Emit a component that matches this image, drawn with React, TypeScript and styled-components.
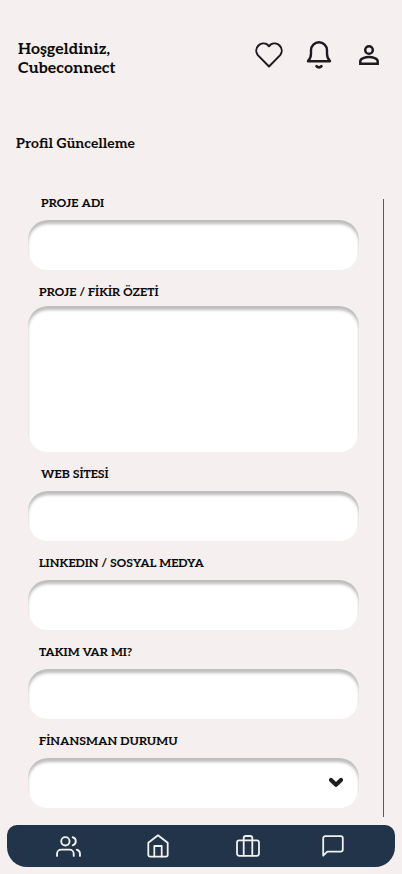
import React from "react";
import styled, { createGlobalStyle } from "styled-components";

const GlobalStyle = createGlobalStyle`
  *, *::before, *::after { box-sizing: border-box; }
  body {
    margin: 0;
    background: #f5efef;
    color: #0c0c0c;
    font-family: Aleo, "DejaVu Serif", serif;
    font-weight: 700;
  }
  button, input, textarea, select { font: inherit; color: inherit; }
`;

const Page = styled.div`
  display: flex;
  flex-direction: column;
  min-height: 100vh;
`;

const Header = styled.header`
  display: flex;
  justify-content: space-between;
  align-items: flex-start;
  padding: 37px 15px 0 18px;
`;

const Greeting = styled.p`
  margin: 0;
  padding-top: 3px;
  font-size: 16px;
  line-height: 19px;
`;

const Actions = styled.div`
  display: flex;
  gap: 14px;
  color: #1d1b20;
`;

const IconButton = styled.button`
  display: grid;
  place-items: center;
  width: 36px;
  height: 36px;
  padding: 0;
  border: 0;
  background: none;
  cursor: pointer;
`;

const Title = styled.h1`
  margin: 56px 16px 0;
  font-size: 14px;
  line-height: 20px;
`;

const Form = styled.form`
  margin: 45px 18px 0 28px;
  padding: 0 24px 9px 0;
  border-right: 1px solid #5c5a5a;
`;

const Field = styled.div`
  & + & {
    padding-top: 14px;
  }
`;

const Label = styled.label<{ $inset?: boolean; $first?: boolean; $tight?: boolean }>`
  display: block;
  padding-left: ${(p) => (p.$inset ? 13 : 11)}px;
  margin-bottom: ${(p) => (p.$tight ? 4 : 7)}px;
  font-size: 12px;
  line-height: ${(p) => (p.$first ? 10 : 18)}px;
  ${(p) => p.$first && "padding-bottom: 4px;"}
`;

const Control = styled.input`
  display: block;
  width: 100%;
  height: 50px;
  padding: 8px 18px;
  border: 0;
  border-radius: 20px;
  background: #fff;
  box-shadow: inset 0 4px 3px rgba(0, 0, 0, 0.26);
  font-size: 14px;
  outline-color: #213449;
`;

const TextArea = styled(Control).attrs({ as: "textarea" })`
  height: 146px;
  resize: none;
`;

const SelectWrap = styled.div`
  display: grid;
  align-items: center;

  & > * {
    grid-area: 1 / 1;
  }
  & > svg {
    justify-self: end;
    margin-right: 15px;
    pointer-events: none;
    color: #1d1b20;
  }
`;

const Select = styled(Control).attrs({ as: "select" })`
  appearance: none;
`;

const Nav = styled.nav`
  display: grid;
  grid-template-columns: 9fr 9fr 9fr 8fr;
  margin: 8px 7px 7px;
  padding: 0 22px 0 16px;
  border-radius: 10px 10px 20px 20px;
  background: #213449;
`;

const NavLink = styled.a`
  display: grid;
  place-items: center;
  height: 42px;
  color: #f3f1ee;
`;

const Line = styled.svg`
  display: block;
  fill: none;
  stroke: currentColor;
  stroke-linecap: round;
  stroke-linejoin: round;
`;

const Heart = () => (
  <Line width="30" height="28" viewBox="0 0 30 28" strokeWidth="2" aria-hidden="true">
    <path d="M15 25.500 3.800 14.100A7.200 7.200 0 0 1 13.500 3.700L15 5.300l1.500-1.600a7.200 7.200 0 0 1 9.700 10.400Z" />
  </Line>
);

const Bell = () => (
  <Line width="28" height="30" viewBox="0 0 28 30" strokeWidth="2.4" aria-hidden="true">
    <path d="M3 21.200c2-2 3-4.300 3-7.500V10.200a8 8 0 0 1 16 0v3.500c0 3.200 1 5.500 3 7.500Z" />
    <path d="M11.500 26.200c1.300 1.500 3.700 1.500 5 0" strokeWidth="2.600" />
  </Line>
);

const Person = () => (
  <Line width="22" height="22" viewBox="0 0 22 22" strokeWidth="2.5" aria-hidden="true">
    <circle cx="11" cy="6" r="3.800" />
    <path d="M2.300 19.700v-2.500c0-2.800 5-4.100 8.700-4.100s8.700 1.300 8.700 4.100v2.500Z" strokeLinejoin="miter" />
  </Line>
);

const Chevron = () => (
  <Line width="16" height="12" viewBox="0 0 16 12" strokeWidth="4.2" aria-hidden="true">
    <path d="m3 3 5 4.700L13 3" />
  </Line>
);

const Users = () => (
  <Line width="25" height="25" viewBox="0 0 24 24" strokeWidth="1.8" aria-hidden="true">
    <circle cx="9" cy="7" r="4" />
    <path d="M17 21v-2a4 4 0 0 0-4-4H5a4 4 0 0 0-4 4v2M23 21v-2a4 4 0 0 0-3-3.870M16 3.130a4 4 0 0 1 0 7.750" />
  </Line>
);

const Home = () => (
  <Line width="22" height="24" viewBox="0 0 22 24" strokeWidth="1.8" aria-hidden="true">
    <path d="M1.300 8.700 11 1.300l9.700 7.400v12.100a1.800 1.800 0 0 1-1.800 1.800H3.100a1.800 1.800 0 0 1-1.800-1.800Z" />
    <path d="M7.300 22.500V12h7.400v10.500" />
  </Line>
);

const Suitcase = () => (
  <Line width="24" height="22" viewBox="0 0 24 22" strokeWidth="1.8" aria-hidden="true">
    <rect x="1" y="5.300" width="22" height="15.500" rx="2.200" />
    <path d="M7.700 20.500V3.200A2.200 2.200 0 0 1 9.900 1h4.200a2.200 2.200 0 0 1 2.200 2.200v17.300" />
  </Line>
);

const Message = () => (
  <Line width="22" height="22" viewBox="0 0 22 22" strokeWidth="1.8" aria-hidden="true">
    <path d="M1.200 20.700V3.200a2 2 0 0 1 2-2h15.600a2 2 0 0 1 2 2v11.400a2 2 0 0 1-2 2H5.300Z" />
  </Line>
);

export default function App() {
  return (
    <Page>
      <GlobalStyle />
      <Header>
        <Greeting>
          Hoşgeldiniz,
          <br />
          Cubeconnect
        </Greeting>
        <Actions>
          <IconButton type="button" aria-label="Favoriler"><Heart /></IconButton>
          <IconButton type="button" aria-label="Bildirimler"><Bell /></IconButton>
          <IconButton type="button" aria-label="Profil"><Person /></IconButton>
        </Actions>
      </Header>
      <Title>Profil Güncelleme</Title>
      <Form>
        <Field>
          <Label htmlFor="name" $inset $first>PROJE ADI</Label>
          <Control id="name" type="text" />
        </Field>
        <Field>
          <Label htmlFor="summary" $tight>PROJE / FİKİR ÖZETİ</Label>
          <TextArea id="summary" />
        </Field>
        <Field>
          <Label htmlFor="website" $inset>WEB SİTESİ</Label>
          <Control id="website" type="text" />
        </Field>
        <Field>
          <Label htmlFor="social">LINKEDIN / SOSYAL MEDYA</Label>
          <Control id="social" type="text" />
        </Field>
        <Field>
          <Label htmlFor="team">TAKIM VAR MI?</Label>
          <Control id="team" type="text" />
        </Field>
        <Field>
          <Label htmlFor="funding">FİNANSMAN DURUMU</Label>
          <SelectWrap>
            <Select id="funding" />
            <Chevron />
          </SelectWrap>
        </Field>
      </Form>
      <Nav>
        <NavLink href="#community" aria-label="Topluluk"><Users /></NavLink>
        <NavLink href="#home" aria-label="Ana sayfa"><Home /></NavLink>
        <NavLink href="#projects" aria-label="Projeler"><Suitcase /></NavLink>
        <NavLink href="#messages" aria-label="Mesajlar"><Message /></NavLink>
      </Nav>
    </Page>
  );
}
